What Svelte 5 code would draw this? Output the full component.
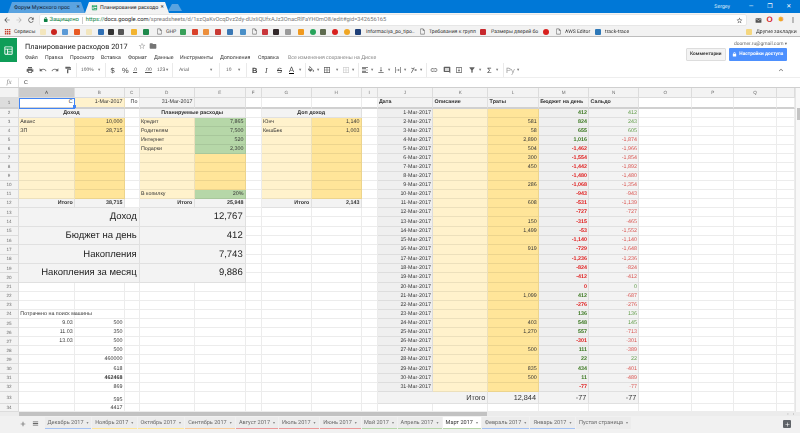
<script>
  const P = {
    back: 'M20 11H7.83l5.59-5.59L12 4l-8 8 8 8 1.41-1.41L7.83 13H20v-2z',
    fwd: 'M12 4l-1.41 1.41L16.17 11H4v2h12.17l-5.58 5.59L12 20l8-8z',
    reload: 'M17.65 6.35C16.2 4.9 14.21 4 12 4c-4.42 0-7.99 3.58-7.99 8s3.57 8 7.99 8c3.73 0 6.84-2.55 7.73-6h-2.08c-.82 2.33-3.04 4-5.65 4-3.31 0-6-2.69-6-6s2.69-6 6-6c1.66 0 3.14.69 4.22 1.78L13 11h7V4l-2.35 2.35z',
    star: 'M22 9.24l-7.19-.62L12 2 9.19 8.63 2 9.24l5.46 4.73L5.82 21 12 17.27 18.18 21l-1.63-7.03L22 9.24zM12 15.4l-3.76 2.27 1-4.28-3.32-2.88 4.38-.38L12 6.1l1.71 4.04 4.38.38-3.32 2.88 1 4.28L12 15.4z',
    folder: 'M10 4H4c-1.1 0-1.99.9-1.99 2L2 18c0 1.1.9 2 2 2h16c1.1 0 2-.9 2-2V8c0-1.1-.9-2-2-2h-8l-2-2z',
    lock: 'M18 8h-1V6c0-2.76-2.24-5-5-5S7 3.24 7 6v2H6c-1.1 0-2 .9-2 2v10c0 1.1.9 2 2 2h12c1.1 0 2-.9 2-2V10c0-1.1-.9-2-2-2zM9 6c0-1.66 1.34-3 3-3s3 1.34 3 3v2H9V6z',
    mail: 'M20 4H4c-1.1 0-2 .9-2 2v12c0 1.1.9 2 2 2h16c1.1 0 2-.9 2-2V6c0-1.1-.9-2-2-2zm0 4l-8 5-8-5V6l8 5 8-5v2z',
    doc: 'M6 2c-1.1 0-2 .9-2 2v16c0 1.1.9 2 2 2h12c1.1 0 2-.9 2-2V8l-6-6H6zm0 2h7v5h5v11H6V4z',
    dots: 'M12 8a2 2 0 1 0 0-4 2 2 0 0 0 0 4zm0 2a2 2 0 1 0 0 4 2 2 0 0 0 0-4zm0 6a2 2 0 1 0 0 4 2 2 0 0 0 0-4z',
    apps: 'M3 3h5v5H3zM10 3h5v5h-5zM17 3h5v5h-5zM3 10h5v5H3zM10 10h5v5h-5zM17 10h5v5h-5zM3 17h5v5H3zM10 17h5v5h-5zM17 17h5v5h-5z',
    print: 'M19 8H5c-1.66 0-3 1.34-3 3v6h4v4h12v-4h4v-6c0-1.66-1.34-3-3-3zm-3 11H8v-5h8v5zm3-7c-.55 0-1-.45-1-1s.45-1 1-1 1 .45 1 1-.45 1-1 1zm-1-9H6v4h12V3z',
    undo: 'M12.5 8c-2.65 0-5.05.99-6.9 2.6L2 7v9h9l-3.62-3.62c1.39-1.16 3.16-1.88 5.12-1.88 3.54 0 6.55 2.31 7.6 5.5l2.37-.78C21.08 11.03 17.15 8 12.5 8z',
    redo: 'M18.4 10.6C16.55 8.99 14.15 8 11.5 8c-4.65 0-8.58 3.03-9.96 7.22L3.9 16c1.05-3.19 4.05-5.5 7.6-5.5 1.95 0 3.73.72 5.12 1.88L13 16h9V7l-3.6 3.6z',
    paint: 'M18 4V3c0-.55-.45-1-1-1H5c-.55 0-1 .45-1 1v4c0 .55.45 1 1 1h12c.55 0 1-.45 1-1V6h1v4H9v11c0 .55.45 1 1 1h2c.55 0 1-.45 1-1v-9h8V4h-3z',
    fill: 'M16.56 8.94L7.62 0 6.21 1.41l2.38 2.38-5.15 5.15c-.59.59-.59 1.54 0 2.12l5.5 5.5c.29.29.68.44 1.06.44s.77-.15 1.06-.44l5.5-5.5c.59-.58.59-1.53 0-2.12zM5.21 10L10 5.21 14.79 10H5.21zM19 11.5s-2 2.17-2 3.5c0 1.1.9 2 2 2s2-.9 2-2c0-1.33-2-3.5-2-3.5z',
    borders: 'M3 3v18h18V3H3zm8 16H5v-6h6v6zm0-8H5V5h6v6zm8 8h-6v-6h6v6zm0-8h-6V5h6v6z',
    align: 'M15 15H3v2h12v-2zm0-8H3v2h12V7zM3 13h18v-2H3v2zm0 8h18v-2H3v2zM3 3v2h18V3H3z',
    valign: 'M16 13h-3V3h-2v10H8l4 4 4-4zM4 19v2h16v-2H4z',
    wrap: 'M3 3h2v18H3zM19 3h2v18h-2zM7 11h6V8l4 4-4 4v-3H7z',
    rotate: 'M3 20l9-16 2 1-9 16zM14 9l7 2v2l-7 2v-2l3-1-3-1zM4 5l6 2-1 2-6-2z',
    link: 'M3.9 12c0-1.71 1.39-3.1 3.1-3.1h4V7H7c-2.76 0-5 2.24-5 5s2.24 5 5 5h4v-1.9H7c-1.71 0-3.1-1.39-3.1-3.1zM8 13h8v-2H8v2zm9-6h-4v1.9h4c1.71 0 3.1 1.39 3.1 3.1s-1.39 3.1-3.1 3.1h-4V17h4c2.76 0 5-2.24 5-5s-2.24-5-5-5z',
    comment: 'M21.99 4c0-1.1-.89-2-1.99-2H4c-1.1 0-2 .9-2 2v12c0 1.1.9 2 2 2h14l4 4-.01-18zM18 14H6v-2h12v2zm0-3H6V9h12v2zm0-3H6V6h12v2z',
    chart: 'M19 3H5c-1.1 0-2 .9-2 2v14c0 1.1.9 2 2 2h14c1.1 0 2-.9 2-2V5c0-1.1-.9-2-2-2zm0 16H5V5h14v14zM11 7h2v6h3l-4 4-4-4h3z',
    filter: 'M4.25 5.61C6.27 8.2 10 13 10 13v6c0 .55.45 1 1 1h2c.55 0 1-.45 1-1v-6s3.72-4.8 5.74-7.39C20.25 4.95 19.78 4 18.95 4H5.04c-.83 0-1.3.95-.79 1.61z',
    up: 'M12 8l-6 6 1.41 1.41L12 10.83l4.59 4.58L18 14z',
    plus: 'M19 13h-6v6h-2v-6H5v-2h6V5h2v6h6v2z',
    list: 'M3 5h18v3H3zM3 10.5h18v3H3zM3 16h18v3H3z',
    sheet: 'M19 3H5c-1.1 0-2 .9-2 2v14c0 1.1.9 2 2 2h14c1.1 0 2-.9 2-2V5c0-1.1-.9-2-2-2zM5 5h14v3H5zm0 5h4v9H5zm6 0h8v4h-8zm0 6h8v3h-8z'
  };

  // place items along a row: each one gets the space up to the next one
  const place = (list, end) =>
    list.map((it, i) => ({ ...it, w: (i + 1 < list.length ? list[i + 1].x : end) - it.x }));

  const bookmarks = place([
    { x: 4, d: P.apps, fg: '#c5432f' }, { x: 14, t: 'Сервисы' },
    { x: 40, c: '#f3e6bd' }, { x: 51, c: '#c9241e', round: true }, { x: 62, c: '#5b9ad6' },
    { x: 74, c: '#e85a23' }, { x: 86, c: '#f3e6bd' }, { x: 98, c: '#2f6fb4' },
    { x: 108, c: '#333' }, { x: 118, c: '#555' }, { x: 131, c: '#f2b431' },
    { x: 143, c: '#1f8a4c' }, { x: 156, d: P.doc, fg: '#777' }, { x: 166, t: 'GHP' },
    { x: 180, c: '#38a05a' }, { x: 192, c: '#d9412b' }, { x: 203, c: '#ec8f3c' },
    { x: 215, c: '#c83a34' }, { x: 227, c: '#3a78b5' }, { x: 240, c: '#4a8fc7' },
    { x: 251, d: P.doc, fg: '#777' }, { x: 262, c: '#c9363b' }, { x: 273, c: '#33292b' },
    { x: 285, c: '#9a9a9a' }, { x: 298, c: '#f09a20' }, { x: 310, c: '#27a35b', round: true },
    { x: 320, c: '#5e6b4f' }, { x: 332, c: '#d8201e', round: true }, { x: 344, c: '#f0a623', round: true },
    { x: 355, c: '#1e3f78' }, { x: 366, t: 'Informaciya_po_tipo..' },
    { x: 419, d: P.doc, fg: '#777' }, { x: 429, t: 'Требования к групп' },
    { x: 480, c: '#c8282d' }, { x: 491, t: 'Размеры дверей бо' },
    { x: 543, c: '#d8201e', round: true }, { x: 555, d: P.doc, fg: '#777' }, { x: 565, t: 'AWS Editor' },
    { x: 595, c: '#2e78b8' }, { x: 605, t: 'track-trace' }, { x: 746, c: '#f5d77f' },
    { x: 756, t: 'Другие закладки' }
  ], 800);

  const menu = place([
    { x: 25, t: 'Файл' }, { x: 45, t: 'Правка' }, { x: 70, t: 'Просмотр' }, { x: 101, t: 'Вставка' },
    { x: 128, t: 'Формат' }, { x: 154, t: 'Данные' }, { x: 180, t: 'Инструменты' }, { x: 220, t: 'Дополнения' },
    { x: 258, t: 'Справка' }, { x: 288, t: 'Все изменения сохранены на Диске', muted: true }
  ], 400);

  const tools = place([
    { x: 26, d: P.print }, { x: 39, d: P.undo }, { x: 51, d: P.redo }, { x: 64, d: P.paint },
    { x: 75.5, sep: true }, { x: 81, t: '100%' }, { x: 98, car: true }, { x: 104.5, sep: true },
    { x: 110.5, t: '$', big: true }, { x: 122, t: '%', big: true }, { x: 133, t: '.0', und: true }, { x: 145, t: '.00', und: true },
    { x: 157, t: '123' }, { x: 166, car: true }, { x: 171.5, sep: true }, { x: 179, t: 'Arial' },
    { x: 210, car: true }, { x: 218.5, sep: true }, { x: 226, t: '10' }, { x: 238, car: true },
    { x: 245.5, sep: true }, { x: 252, t: 'B', big: true, bold: true }, { x: 265, t: 'I', big: true, ital: true },
    { x: 277, t: 'S', big: true, strike: true }, { x: 289, t: 'A', big: true, bar: true }, { x: 299, car: true },
    { x: 304.5, sep: true }, { x: 307, d: P.fill }, { x: 317, car: true }, { x: 323, d: P.borders },
    { x: 336, car: true }, { x: 342, d: P.borders, off: true }, { x: 352, car: true }, { x: 357.5, sep: true },
    { x: 361, d: P.align }, { x: 371, car: true }, { x: 377, d: P.valign }, { x: 388, car: true },
    { x: 394, d: P.wrap }, { x: 404, car: true }, { x: 410, d: P.rotate }, { x: 420, car: true },
    { x: 425.5, sep: true }, { x: 430, d: P.link }, { x: 443, d: P.comment }, { x: 455, d: P.chart },
    { x: 468, d: P.filter }, { x: 479, car: true }, { x: 487, t: 'Σ', big: true }, { x: 496, car: true },
    { x: 502.5, sep: true }, { x: 506, t: 'Ру', big: true, muted: true }, { x: 517, car: true }, { x: 777, d: P.up }
  ], 795);

  const sheetTabs = place([
    { x: 49, t: 'Декабрь 2017', line: '#a4c2f4' }, { x: 96, t: 'Ноябрь 2017', line: '#ffe599' },
    { x: 141.5, t: 'Октябрь 2017', line: '#ffe599' }, { x: 189, t: 'Сентябрь 2017', line: '#f9cb9c' },
    { x: 240, t: 'Август 2017', line: '#ea9999' }, { x: 283, t: 'Июль 2017', line: '#ea9999' },
    { x: 323.5, t: 'Июнь 2017', line: '#ea9999' }, { x: 365.5, t: 'Май 2017', line: '#b6d7a8' },
    { x: 401.5, t: 'Апрель 2017', line: '#b6d7a8' }, { x: 446.5, t: 'Март 2017', line: '#b6d7a8', on: true },
    { x: 486, t: 'Февраль 2017', line: '#a4c2f4' }, { x: 534, t: 'Январь 2017', line: '#a4c2f4' },
    { x: 580, t: 'Пустая страница' }
  ], 636);

  const names = 'ABCDEFGHIJKLMNOPQR';
  const letters = 'ABCDEFGHIJKLMNOPQ'.split('').concat('');
  const colW = [56, 49.7, 15, 55, 51, 16, 50, 50, 16, 55.6, 55, 50.7, 50.3, 50, 53, 42, 42.4, 18.3];
  const rowH = [10.5];
  for (let r = 2; r <= 12; r++) rowH.push(9.05);
  for (let r = 13; r <= 20; r++) rowH.push(9.33);
  for (let r = 21; r <= 32; r++) rowH.push(9.1);
  rowH.push(12.3, 8.2);

  // sheet contents, keyed by cell address; merged cells cover their neighbours
  const data = {};
  const covered = new Set();
  const put = (key, t, cls = '', cs = 1, rs = 1) => {
    data[key] = { t, cls, cs, rs };
    const c0 = names.indexOf(key[0]);
    const r0 = +key.slice(1);
    for (let c = c0; c < c0 + cs; c++) {
      for (let r = r0; r < r0 + rs; r++) {
        if (c !== c0 || r !== r0) covered.add(names[c] + r);
      }
    }
  };

  put('A1', 'С', 'r sel');
  put('B1', '1-Mar-2017', 'r ly');
  put('C1', 'По', 'r');
  put('D1', '31-Mar-2017', 'r g');
  put('E1', '', 'g');
  for (const [c, t] of [['J', 'Дата'], ['K', 'Описание'], ['L', 'Траты'], ['M', 'Бюджет на день'], ['N', 'Сальдо']]) put(c + '1', t, 'g head');

  put('A2', 'Доход', 'c g b', 2);
  put('D2', 'Планируемые расходы', 'c g b', 2);
  put('G2', 'Доп доход', 'c g b', 2);
  for (let r = 3; r <= 11; r++) {
    put('A' + r, '', 'ly'); put('B' + r, '', 'r dy');
    put('D' + r, '', 'ly'); put('E' + r, '', 'r dy');
    put('G' + r, '', 'ly'); put('H' + r, '', 'r dy');
  }
  const rows = [['A', 'B', 3, 'Аванс', '10,000'], ['A', 'B', 4, 'ЗП', '28,715'], ['G', 'H', 3, 'Юнч', '1,140'], ['G', 'H', 4, 'КешБек', '1,003']];
  for (const [a, b, r, l, v] of rows) { data[a + r].t = l; data[b + r].t = v; }
  const plan = [[3, 'Кредит', '7,865'], [4, 'Родителям', '7,500'], [5, 'Интернет', '520'], [6, 'Подарки', '2,300'], [11, 'В копилку', '20%']];
  for (const [r, l, v] of plan) { data['D' + r].t = l; put('E' + r, v, 'r green'); }
  put('A12', 'Итого', 'r g b'); put('B12', '38,715', 'r g b');
  put('D12', 'Итого', 'r g b'); put('E12', '25,948', 'r g b');
  put('G12', 'Итого', 'r g b'); put('H12', '2,143', 'r g b');

  const stats = [[13, 'Доход', '12,767'], [15, 'Бюджет на день', '412'], [17, 'Накопления', '7,743'], [19, 'Накопления за месяц', '9,886']];
  for (const [r, l, v] of stats) {
    put('A' + r, l, 'r g big', 3, 2);
    put('D' + r, v, 'r g big', 2, 2);
  }

  put('A24', 'Потрачено на поиск машины', 'l');
  const spent = [[25, '9.03', '500'], [26, '11.03', '350'], [27, '13.03', '500'], [28, '', '500'], [29, '', '460000'], [30, '', '618'], [31, '', '462468'], [32, '', '869'], [33, '', '595'], [34, '', '4417']];
  for (const [r, a, b] of spent) {
    if (a) put('A' + r, a, 'r');
    put('B' + r, b, r === 31 ? 'r b' : r === 33 ? 'r low' : 'r');
  }

  const days = [
    ['', '412', '412'], ['581', '824', '243'], ['58', '655', '605'], ['2,890', '1,016', '-1,874'], ['504', '-1,462', '-1,966'],
    ['300', '-1,554', '-1,854'], ['450', '-1,442', '-1,892'], ['', '-1,480', '-1,480'], ['286', '-1,068', '-1,354'], ['', '-943', '-943'],
    ['608', '-531', '-1,139'], ['', '-727', '-727'], ['150', '-315', '-465'], ['1,499', '-53', '-1,552'], ['', '-1,140', '-1,140'],
    ['919', '-729', '-1,648'], ['', '-1,236', '-1,236'], ['', '-824', '-824'], ['', '-412', '-412'], ['', '0', '0'],
    ['1,099', '412', '-687'], ['', '-276', '-276'], ['', '136', '136'], ['403', '548', '145'], ['1,270', '557', '-713'],
    ['', '-301', '-301'], ['500', '111', '-389'], ['', '22', '22'], ['835', '434', '-401'], ['500', '11', '-489'], ['', '-77', '-77']
  ];
  days.forEach(([l, m, n], i) => {
    const r = i + 2;
    const neg = (v) => v.startsWith('-') || v === '0';
    put('J' + r, `${i + 1}-Mar-2017`, 'r dg');
    put('K' + r, '', 'ly');
    put('L' + r, l, 'r dy');
    put('M' + r, m, `r dg b ${neg(m) ? 'red' : 'grn'}`);
    put('N' + r, n, `r g ${n.startsWith('-') ? 'red2' : 'grn2'}`);
  });
  put('J33', 'Итого', 'r g mid', 2);
  put('L33', '12,844', 'r g mid');
  put('M33', '-77', 'r g mid');
  put('N33', '-77', 'r g mid');

  const gridCols = ['19px', ...colW.map((w) => w + 'px')].join(' ');
  const gridRows = ['10px', ...rowH.map((h) => h + 'px')].join(' ');
</script>

{#snippet icon(d, size = 7, color = '#616161')}
  <svg viewBox="0 0 24 24" width={size} height={size} fill={color}><path {d} /></svg>
{/snippet}

<div class="page">
  <div class="strip">
    <div class="ctab idle">
      <span class="ctab-name">Форум Мужского прос</span><span class="ctab-x">✕</span>
    </div>
    <div class="ctab active">
      {@render icon(P.sheet, 7, '#0f9d58')}<span class="ctab-name">Планирование расходо</span><span class="ctab-x">✕</span>
    </div>
    <div class="ctab newtab"></div>
    <div class="who">Sergey</div>
    <div class="winbtns"><span>—</span><span>❐</span><span>✕</span></div>
  </div>

  <div class="navbar">
    {@render icon(P.back, 8, '#555')}
    {@render icon(P.fwd, 8, '#b5b5b5')}
    {@render icon(P.reload, 8, '#555')}
    <div class="omni">
      {@render icon(P.lock, 5.5, '#0b8043')}
      <span class="secure">Защищено</span>
      <span class="omni-sep"></span>
      <span class="url"><i>https://</i><b>docs.google.com</b>/spreadsheets/d/1szQaKvOcqDvz2dy-dUxIiQUfxAJz3OnacRlFaYH0mO8/edit#gid=342656165</span>
      {@render icon(P.star, 7, '#555')}
    </div>
    <div class="ext">
      {@render icon(P.mail, 7, '#555')}
      <span class="opera">O</span>
      <span class="spark">✸</span>
      {@render icon(P.dots, 8, '#555')}
    </div>
  </div>

  <div class="bookmarks">
    {#each bookmarks as b}
      <div class="slot" style="width:{b.w}px">
        {#if b.t}<span>{b.t}</span>
        {:else if b.d}{@render icon(b.d, 7, b.fg)}
        {:else}<span class="fav" class:round={b.round} style="background:{b.c}"></span>{/if}
      </div>
    {/each}
  </div>

  <div class="docbar">
    <div class="logo">{@render icon(P.sheet, 11, '#fff')}</div>
    <div class="docinfo">
      <div class="titleline">
        <span class="title">Планирование расходов 2017</span>
        <span class="star">{@render icon(P.star, 8, '#aaa')}</span>
        <span class="fold">{@render icon(P.folder, 8, '#757575')}</span>
      </div>
      <div class="menu">
        {#each menu as m}
          <span class:muted={m.muted} style="width:{m.w}px">{m.t}</span>
        {/each}
      </div>
    </div>
    <div class="account">
      <div class="email">doomer.ru@gmail.com <span class="drop">▾</span></div>
      <div class="btns">
        <span class="btn-c">Комментарии</span>
        <span class="btn-s">{@render icon(P.lock, 5, '#fff')}Настройки доступа</span>
      </div>
    </div>
  </div>

  <div class="toolbar">
    {#each tools as it}
      <div class="tool" style="width:{it.w}px">
        {#if it.sep}<span class="sep"></span>
        {:else if it.car}<span class="caret">▾</span>
        {:else if it.d}<span class:off={it.off}>{@render icon(it.d, 8)}</span>
        {:else}
          <span class="tt" class:big={it.big} class:bold={it.bold} class:ital={it.ital} class:strike={it.strike}
            class:und={it.und} class:bar={it.bar} class:muted={it.muted}>{it.t}</span>
        {/if}
      </div>
    {/each}
  </div>

  <div class="formula">
    <span class="fx">fx</span>
    <span class="fval">С</span>
  </div>

  <div class="sheet">
    <div class="grid" style="grid-template-columns:{gridCols};grid-template-rows:{gridRows}">
      <div class="corner"></div>
      {#each letters as l, i}
        <div class="colhead" class:picked={i === 0}>{l}</div>
      {/each}
      {#each rowH as _, ri}
        {@const r = ri + 1}
        <div class="rownum" class:picked1={r === 1} class:frozen={r === 1}>{r}</div>
        {#each letters as _l, ci}
          {@const key = names[ci] + r}
          {@const cell = data[key]}
          {#if !covered.has(key)}
            <div class="cell {cell ? cell.cls : ''}" class:frozen={r === 1}
              style={cell && (cell.cs > 1 || cell.rs > 1) ? `grid-column:span ${cell.cs};grid-row:span ${cell.rs}` : undefined}>
              {cell ? cell.t : ''}
            </div>
          {/if}
        {/each}
      {/each}
    </div>
    <div class="vscroll"><div class="vthumb"></div></div>
  </div>

  <div class="hscroll">
    <div class="hthumb"></div>
    <div class="harrows"><span>‹</span><span>›</span></div>
  </div>

  <div class="tabsbar">
    <span class="addsheet">{@render icon(P.plus, 8, '#555')}</span>
    <span class="allsheets">{@render icon(P.list, 7, '#666')}</span>
    <div class="tabs">
      {#each sheetTabs as t}
        <div class="stab" class:on={t.on} style="width:{t.w - 1}px;border-bottom-color:{t.line || 'transparent'}">
          <span>{t.t}</span><span class="scar">▾</span>
        </div>
      {/each}
    </div>
    <div class="explore">{@render icon(P.plus, 7, '#fff')}</div>
  </div>
</div>

<style>
  :global(body) {
    margin: 0;
    background: #fff;
  }

  .page {
    width: 800px;
    height: 433px;
    overflow: hidden;
    display: flex;
    flex-direction: column;
    font-family: 'Liberation Sans', Arial, sans-serif;
    text-rendering: geometricPrecision;
    filter: blur(0.35px);
  }

  svg {
    display: block;
    flex: none;
  }

  /* browser chrome */
  .strip {
    height: 13px;
    background: #0078d7;
    display: flex;
    align-items: flex-end;
    padding-left: 8px;
    font-family: Roboto, sans-serif;
    font-size: 5.3px;
    flex: none;
  }

  .ctab {
    height: 11px;
    display: flex;
    align-items: center;
    gap: 2px;
    padding: 0 5px 0 6px;
    box-sizing: border-box;
    clip-path: polygon(0 100%, 4px 0, calc(100% - 4px) 0, 100% 100%);
  }

  .idle {
    width: 77px;
    background: #5aa3e0;
    color: #123;
  }

  .active {
    width: 84px;
    background: #f2f2f2;
    color: #222;
  }

  .newtab {
    width: 14px;
    height: 7px;
    margin-left: -1px;
    background: #5aa3e0;
    margin-bottom: 2px;
  }

  .ctab-name {
    flex: 1;
    white-space: nowrap;
  }

  .ctab-x {
    font-size: 4.5px;
  }

  .who {
    margin-left: auto;
    color: #dcecf9;
    font-size: 5.2px;
    align-self: center;
    margin-right: 12px;
  }

  .winbtns {
    display: flex;
    width: 56px;
    color: #fff;
    align-self: center;
    font-size: 6px;
    justify-content: space-around;
    padding-right: 2px;
  }

  .navbar {
    height: 14px;
    flex: none;
    background: #f2f2f2;
    display: flex;
    align-items: center;
    padding-left: 3px;
    gap: 4px;
  }

  .omni {
    margin-left: 1px;
    width: 706px;
    flex: none;
    height: 10px;
    background: #fff;
    border-radius: 1px;
    box-shadow: 0 0 0 0.5px #d9d9d9;
    display: flex;
    align-items: center;
    padding: 0 3px;
    box-sizing: border-box;
    font-family: Roboto, sans-serif;
    font-size: 5.72px;
    color: #777;
    white-space: nowrap;
  }

  .secure {
    color: #0b8043;
    margin-left: 1px;
    font-size: 5.8px;
  }

  .omni-sep {
    width: 1px;
    height: 7px;
    background: #ccc;
    margin: 0 3px;
  }

  .url {
    flex: 1;
  }

  .url i {
    font-style: normal;
    color: #0b8043;
  }

  .url b {
    font-weight: 400;
    color: #222;
  }

  .ext {
    flex: 1;
    display: flex;
    align-items: center;
    justify-content: space-around;
    padding-left: 2px;
  }

  .opera {
    color: #d8201e;
    font-weight: 700;
    font-size: 8px;
    line-height: 1;
  }

  .spark {
    color: #f0a623;
    font-size: 8px;
    line-height: 1;
  }

  .bookmarks {
    height: 10px;
    flex: none;
    box-sizing: border-box;
    background: #f2f2f2;
    border-bottom: 1px solid #bdbdbd;
    display: flex;
    align-items: center;
    padding-left: 4px;
    font-family: Roboto, sans-serif;
    font-size: 5.1px;
    color: #333;
    white-space: nowrap;
  }

  .slot {
    flex: none;
    display: flex;
    align-items: center;
  }

  .fav {
    width: 6px;
    height: 6px;
    border-radius: 1px;
    display: block;
  }

  .fav.round {
    border-radius: 50%;
  }

  /* docs header */
  .docbar {
    height: 26px;
    flex: none;
    display: flex;
    font-family: Roboto, sans-serif;
  }

  .logo {
    width: 17px;
    height: 24px;
    margin-top: 1px;
    background: #0f9d58;
    display: flex;
    align-items: center;
    justify-content: center;
  }

  .docinfo {
    margin-left: 8px;
    flex: 1;
  }

  .titleline {
    display: flex;
    align-items: center;
    height: 18px;
  }

  .title {
    font-size: 7.3px;
    color: #222;
    width: 113px;
    white-space: nowrap;
  }

  .fold {
    margin-left: 3px;
  }

  .menu {
    display: flex;
    font-size: 5.2px;
    color: #333;
    white-space: nowrap;
  }

  .muted {
    color: #8a8a8a;
  }

  .account {
    width: 114px;
    padding-right: 13px;
    box-sizing: border-box;
    text-align: right;
  }

  .email {
    font-size: 4.9px;
    color: #666;
    height: 11px;
    line-height: 15px;
  }

  .drop {
    font-size: 4.5px;
  }

  .btns {
    display: flex;
    gap: 3px;
    font-size: 4.8px;
    white-space: nowrap;
    justify-content: flex-end;
  }

  .btn-c,
  .btn-s {
    height: 13px;
    display: flex;
    align-items: center;
    justify-content: center;
    border-radius: 1px;
    font-weight: 700;
    box-sizing: border-box;
  }

  .btn-c {
    width: 40px;
    background: #f3f3f3;
    border: 0.5px solid #ddd;
    color: #444;
  }

  .btn-s {
    width: 59px;
    background: #4d90fe;
    color: #fff;
    gap: 2px;
  }

  /* sheets toolbar */
  .toolbar {
    height: 15px;
    flex: none;
    display: flex;
    align-items: center;
    padding-left: 26px;
    font-size: 4.9px;
    color: #555;
    border-bottom: 1px solid #eee;
    box-sizing: border-box;
  }

  .tool {
    flex: none;
    display: flex;
    align-items: center;
    height: 100%;
  }

  .sep {
    width: 1px;
    height: 100%;
    background: #eaeaea;
  }

  .caret {
    font-size: 4.5px;
    color: #777;
  }

  .off {
    opacity: 0.3;
  }

  .tt {
    white-space: nowrap;
  }

  .big {
    font-size: 7.5px;
    color: #444;
  }

  .bold {
    font-weight: 700;
  }

  .ital {
    font-style: italic;
    font-family: 'Liberation Serif', serif;
  }

  .strike {
    text-decoration: line-through;
  }

  .und {
    text-decoration: underline;
  }

  .bar {
    border-bottom: 1.5px solid #000;
    line-height: 7px;
  }

  .tt.muted {
    color: #999;
  }

  .formula {
    height: 10px;
    flex: none;
    display: flex;
    align-items: center;
    border-bottom: 1px solid #cfcfcf;
    box-sizing: border-box;
  }

  .fx {
    width: 19px;
    text-align: center;
    font-family: 'Liberation Serif', serif;
    font-style: italic;
    font-size: 7px;
    color: #888;
    border-right: 1px solid #e2e2e2;
    box-sizing: border-box;
    line-height: 9px;
  }

  .fval {
    margin-left: 5px;
    font-size: 5.4px;
    color: #333;
  }

  /* the grid itself */
  .sheet {
    height: 324px;
    flex: none;
    display: flex;
    overflow: hidden;
  }

  .grid {
    width: 795px;
    flex: none;
    display: grid;
    font-size: 5.35px;
    color: #333;
  }

  .corner,
  .colhead,
  .rownum {
    background: #f3f3f3;
    color: #6f6f6f;
    display: flex;
    align-items: center;
    justify-content: center;
    font-size: 4.6px;
    box-sizing: border-box;
    border-right: 1px solid #dcdcdc;
    border-bottom: 1px solid #dcdcdc;
  }

  .colhead.picked {
    background: #ccc;
    color: #444;
  }

  .rownum.picked1 {
    background: #ddd;
  }

  .rownum.frozen,
  .cell.frozen {
    border-bottom: 2px solid #d0d0d0;
  }

  .cell {
    box-sizing: border-box;
    display: flex;
    align-items: center;
    padding: 0 1.3px;
    white-space: nowrap;
    min-width: 0;
    border-right: 1px solid rgba(0, 0, 0, 0.075);
    border-bottom: 1px solid rgba(0, 0, 0, 0.075);
  }

  .r {
    justify-content: flex-end;
  }

  .c {
    justify-content: center;
  }

  .l {
    justify-content: flex-start;
  }

  .b {
    font-weight: 700;
  }

  .g {
    background: #f3f3f3;
  }

  .dg {
    background: #efefef;
  }

  .ly {
    background: #fff2cc;
  }

  .dy {
    background: #ffe599;
  }

  .green {
    background: #b6d7a8;
  }

  .head {
    font-weight: 700;
  }

  .sel {
    position: relative;
    background: #fff;
    outline: 1px solid #4285f4;
    outline-offset: -1px;
  }

  .sel::after {
    content: '';
    position: absolute;
    right: -1.5px;
    bottom: -1.5px;
    width: 3px;
    height: 3px;
    background: #4285f4;
  }

  .cell.big {
    font-size: 9.5px;
    color: #222;
    padding-right: 2px;
  }

  .cell.mid {
    font-size: 7.3px;
    padding-right: 2px;
  }

  .cell.low {
    align-items: flex-end;
  }

  .red {
    color: #e01b1b;
  }

  .grn {
    color: #38761d;
  }

  .red2 {
    color: #d9534f;
  }

  .grn2 {
    color: #5f9b47;
  }

  .vscroll {
    flex: 1;
    background: #f8f8f8;
    border-left: 0.5px solid #e5e5e5;
  }

  .vthumb {
    margin-top: 20px;
    height: 12px;
    margin-left: 0.5px;
    width: 4px;
    background: #c4c4c4;
  }

  .hscroll {
    height: 4px;
    flex: none;
    background: #ececec;
    display: flex;
    align-items: center;
  }

  .hthumb {
    margin-left: 19px;
    width: 468px;
    height: 100%;
    background: #c2c2c2;
  }

  .harrows {
    margin-left: auto;
    margin-right: 6px;
    display: flex;
    gap: 4px;
    font-size: 4px;
    line-height: 4px;
    color: #777;
  }

  /* sheet tabs */
  .tabsbar {
    flex: 1;
    background: #f1f1f1;
    display: flex;
    position: relative;
    font-family: Roboto, sans-serif;
  }

  .addsheet {
    margin: 4px 0 0 19px;
  }

  .allsheets {
    margin: 4px 0 0 5px;
  }

  .tabs {
    margin-left: 6px;
    display: flex;
    gap: 1px;
    height: 12px;
    margin-top: 1px;
  }

  .stab {
    flex: none;
    height: 12px;
    box-sizing: border-box;
    background: #ececec;
    border-bottom: 1px solid transparent;
    display: flex;
    align-items: center;
    justify-content: center;
    gap: 3px;
    font-size: 5.55px;
    color: #6a6a6a;
    white-space: nowrap;
  }

  .stab.on {
    background: #fff;
    color: #333;
  }

  .scar {
    font-size: 4px;
    color: #888;
  }

  .explore {
    position: absolute;
    right: 9px;
    top: 4px;
    width: 8px;
    height: 8px;
    background: #5f6368;
    border-radius: 1px;
    display: flex;
    align-items: center;
    justify-content: center;
  }
</style>
